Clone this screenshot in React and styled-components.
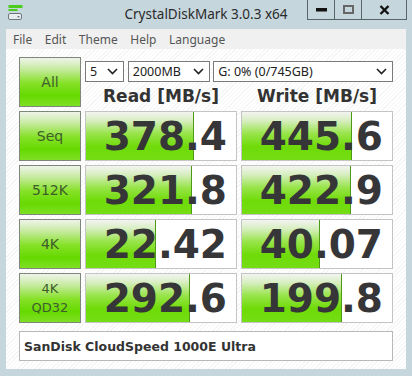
import React from "react";
import styled, { createGlobalStyle } from "styled-components";

const GlobalStyle = createGlobalStyle`
  html, body {
    margin: 0;
    padding: 0;
    background: #c6d6dd;
  }
  * {
    box-sizing: border-box;
  }
`;

const Window = styled.div`
  width: 412px;
  height: 376px;
  background: #c6d6dd;
  display: flex;
  flex-direction: column;
  overflow: hidden;
`;

const TitleBar = styled.div`
  height: 29px;
  display: grid;
  grid-template-columns: 1fr auto 1fr;
  align-items: start;
`;

const AppIcon = styled.svg`
  margin: 5px 0 0 8px;
`;

const Title = styled.div`
  font-family: "Noto Sans", "Open Sans", sans-serif;
  font-size: 13.5px;
  color: #2a2a2a;
  line-height: 29px;
  white-space: nowrap;
`;

const WinButtons = styled.div`
  justify-self: end;
  display: flex;
  margin-right: 5px;
`;

const WinButton = styled.div`
  width: ${(p) => p.w}px;
  height: 20px;
  border: 1px solid #5a6468;
  border-top: none;
  border-left: ${(p) => (p.first ? "1px solid #5a6468" : "none")};
  display: flex;
  align-items: center;
  justify-content: center;
`;

const Client = styled.div`
  margin: 0 6px 7px 6px;
  flex: 1;
  display: flex;
  flex-direction: column;
  background: repeating-linear-gradient(
    135deg,
    #ffffff 0px,
    #ffffff 2px,
    #f5f5f5 2px,
    #f5f5f5 3px
  );
`;

const MenuBar = styled.div`
  height: 20px;
  background: #f0f0f0;
  display: flex;
  align-items: center;
  padding-left: 0.7px;
`;

const MenuItem = styled.span`
  font-family: "Noto Sans", "Open Sans", sans-serif;
  font-size: 12px;
  color: #555;
  padding: 0 6.3px;
`;

const Panel = styled.div`
  padding: 8px 0 0 13px;
  display: grid;
  grid-template-columns: 62px 152px 152px;
  grid-auto-rows: 50px;
  column-gap: 4px;
  row-gap: 4px;
`;

const TestButton = styled.div`
  border: 1px solid #7f877c;
  background: linear-gradient(
    to bottom,
    #eef4ea 0%,
    #c9eba4 22%,
    #86e128 52%,
    #66d900 78%,
    #7ee024 100%
  );
  display: flex;
  flex-direction: column;
  align-items: center;
  justify-content: center;
  font-family: "DejaVu Sans", sans-serif;
  font-size: ${(p) => (p.small ? 13 : 14)}px;
  line-height: ${(p) => (p.small ? "19px" : "16px")};
  color: #3e5d2c;
`;

const TopCell = styled.div`
  grid-column: span 2;
  display: flex;
  flex-direction: column;
  padding-top: 4px;
`;

const Selects = styled.div`
  display: flex;
  gap: 3px;
`;

const Select = styled.div`
  width: ${(p) => p.w}px;
  height: 21px;
  background: #fff;
  border: 1px solid #7a7a7a;
  display: flex;
  align-items: center;
  justify-content: space-between;
  padding: 0 5px 0 4px;
  font-family: "Noto Sans", "Open Sans", sans-serif;
  font-size: 12.5px;
  color: #222;
  margin-left: ${(p) => p.ml || 0}px;
`;

const Headers = styled.div`
  display: grid;
  grid-template-columns: 152px 152px;
  column-gap: 4px;
  margin-top: 4px;
`;

const Header = styled.div`
  text-align: center;
  font-family: "DejaVu Sans", sans-serif;
  font-weight: bold;
  font-size: 17px;
  color: #333;
`;

const ValueBox = styled.div`
  position: relative;
  border: 1px solid #c4c4c4;
  background: #fff;
  overflow: hidden;
`;

const Bar = styled.div`
  position: absolute;
  left: 0;
  top: 0;
  bottom: 0;
  border-right: 1px solid #4d9a16;
  background: linear-gradient(
    to bottom,
    #f3f4f1 0%,
    #d7eec0 18%,
    #98e44a 45%,
    #6fdb08 72%,
    #74dd14 100%
  );
`;

const Value = styled.div`
  position: relative;
  height: 100%;
  display: flex;
  align-items: center;
  justify-content: flex-end;
  padding-right: 9px;
  font-family: "DejaVu Sans", sans-serif;
  font-weight: bold;
  font-size: 39px;
  color: #363638;
`;

const Comment = styled.div`
  margin: 8px 13px 0 13px;
  width: 374px;
  height: 30px;
  background: #fff;
  border: 1px solid #b8b8b8;
  display: flex;
  align-items: center;
  padding-left: 4px;
  font-family: "DejaVu Sans", sans-serif;
  font-weight: bold;
  font-size: 12.5px;
  color: #333;
`;

const Chevron = () => (
  <svg width="11" height="7" viewBox="0 0 11 7">
    <path d="M1 1 L5.5 5.5 L10 1" fill="none" stroke="#222" strokeWidth="1.6" />
  </svg>
);

const rows = [
  { label: ["Seq"], read: "378.4", rw: 108, write: "445.6", ww: 110 },
  { label: ["512K"], read: "321.8", rw: 106, write: "422.9", ww: 109 },
  { label: ["4K"], read: "22.42", rw: 70, write: "40.07", ww: 78 },
  { label: ["4K", "QD32"], read: "292.6", rw: 104, write: "199.8", ww: 100 },
];

const menu = ["File", "Edit", "Theme", "Help", "Language"];

export default function App() {
  return (
    <Window>
      <GlobalStyle />
      <TitleBar>
        <AppIcon width="15" height="16" viewBox="0 0 15 16">
          <rect x="0.5" y="0" width="14" height="3" fill="#4ccc1c" />
          <rect x="0.5" y="4" width="9" height="2" fill="#4ccc1c" />
          <rect x="0.5" y="8.5" width="13" height="6" rx="1.5" fill="#e8eef0" stroke="#6b777c" />
          <rect x="9.5" y="11" width="2" height="1.5" fill="#6b777c" />
        </AppIcon>
        <Title>CrystalDiskMark 3.0.3 x64</Title>
        <WinButtons>
          <WinButton w={28} first>
            <svg width="11" height="4"><rect width="11" height="3.5" fill="#111" /></svg>
          </WinButton>
          <WinButton w={27}>
            <svg width="11" height="9">
              <rect x="1" y="1" width="9" height="7" fill="none" stroke="#666" strokeWidth="2" />
            </svg>
          </WinButton>
          <WinButton w={45}>
            <svg width="11" height="10" viewBox="0 0 11 10">
              <path d="M1.5 1 L9.5 9 M9.5 1 L1.5 9" stroke="#111" strokeWidth="2.4" />
            </svg>
          </WinButton>
        </WinButtons>
      </TitleBar>
      <Client>
        <MenuBar>
          {menu.map((m) => (
            <MenuItem key={m}>{m}</MenuItem>
          ))}
        </MenuBar>
        <Panel>
          <TestButton>All</TestButton>
          <TopCell>
            <Selects>
              <Select w={39}>
                5 <Chevron />
              </Select>
              <Select w={83} ml={1}>
                2000MB <Chevron />
              </Select>
              <Select w={181}>
                G: 0% (0/745GB) <Chevron />
              </Select>
            </Selects>
            <Headers>
              <Header>Read [MB/s]</Header>
              <Header>Write [MB/s]</Header>
            </Headers>
          </TopCell>
          {rows.map((r) => (
            <React.Fragment key={r.label.join("")}>
              <TestButton small={r.label.length > 1}>
                {r.label.map((l) => (
                  <span key={l}>{l}</span>
                ))}
              </TestButton>
              <ValueBox>
                <Bar style={{ width: r.rw }} />
                <Value>{r.read}</Value>
              </ValueBox>
              <ValueBox>
                <Bar style={{ width: r.ww }} />
                <Value>{r.write}</Value>
              </ValueBox>
            </React.Fragment>
          ))}
        </Panel>
        <Comment>SanDisk CloudSpeed 1000E Ultra</Comment>
      </Client>
    </Window>
  );
}
